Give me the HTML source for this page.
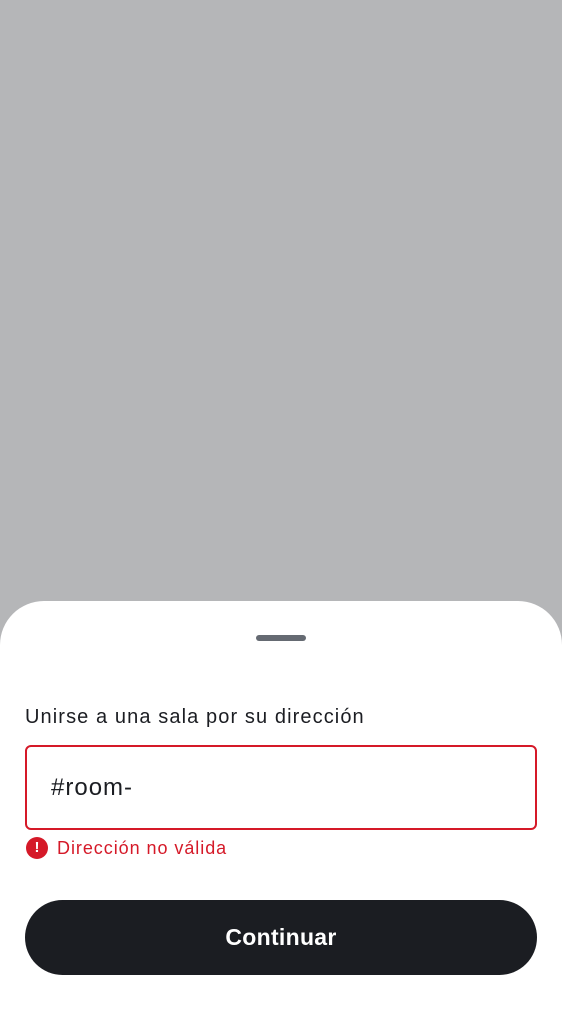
<!DOCTYPE html><html><head><style>
body{margin:0;width:562px;height:1000px;background:#b5b6b8;position:relative;overflow:hidden;font-family:"Liberation Sans",sans-serif}
.sheet{position:absolute;left:0;top:601px;width:562px;height:420px;background:#fff;border-radius:44px 44px 0 0}
.h{position:absolute;left:256px;top:635px;width:50px;height:6px;border-radius:3px;background:#656a72}
.l{position:absolute;left:25px;top:706px;font-size:20px;color:#1b1d22;letter-spacing:1.1px}
.in{position:absolute;left:25px;top:745px;width:508px;height:81px;border:2px solid #d51928;border-radius:6px}
.t{position:absolute;left:51px;top:774px;font-size:24px;color:#1b1d22;letter-spacing:1px}
.ic{position:absolute;left:26px;top:837px;width:22px;height:22px;border-radius:50%;background:#d51928;color:#fff;font-weight:bold;font-size:15px;text-align:center;line-height:22px}
.e{position:absolute;left:57px;top:838px;font-size:18px;color:#d51928;letter-spacing:.95px}
.b{position:absolute;left:25px;top:900px;width:512px;height:75px;border-radius:38px;background:#1b1d22;color:#fff;font-weight:bold;font-size:23px;text-align:center;line-height:75px;letter-spacing:.3px}
</style></head><body>
<div class="sheet"></div><div class="h"></div>
<div class="l">Unirse a una sala por su dirección</div>
<div class="in"></div><div class="t">#room-</div>
<div class="ic">!</div><div class="e">Dirección no válida</div>
<div class="b">Continuar</div>
</body></html>
